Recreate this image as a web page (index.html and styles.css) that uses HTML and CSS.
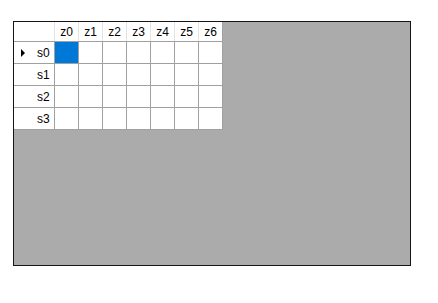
FILE: index.html
```html
<!DOCTYPE html>
<html lang="en">
<head>
  <meta charset="UTF-8">
  <title>Grid</title>
  <link rel="stylesheet" href="styles.css">
</head>
<body>
  <div class="painel">
    <div class="grade">
      <div class="cabecalho">
        <div class="canto"></div>
        <div class="col">z0</div>
        <div class="col">z1</div>
        <div class="col">z2</div>
        <div class="col">z3</div>
        <div class="col">z4</div>
        <div class="col">z5</div>
        <div class="col">z6</div>
      </div>
      <div class="linhas">
        <div class="lin atual"><span class="seta"></span><span class="rotulo">s0</span></div>
        <div class="cel sel"></div><div class="cel"></div><div class="cel"></div><div class="cel"></div><div class="cel"></div><div class="cel"></div><div class="cel"></div>
        <div class="lin"><span class="rotulo">s1</span></div>
        <div class="cel"></div><div class="cel"></div><div class="cel"></div><div class="cel"></div><div class="cel"></div><div class="cel"></div><div class="cel"></div>
        <div class="lin"><span class="rotulo">s2</span></div>
        <div class="cel"></div><div class="cel"></div><div class="cel"></div><div class="cel"></div><div class="cel"></div><div class="cel"></div><div class="cel"></div>
        <div class="lin"><span class="rotulo">s3</span></div>
        <div class="cel"></div><div class="cel"></div><div class="cel"></div><div class="cel"></div><div class="cel"></div><div class="cel"></div><div class="cel"></div>
      </div>
    </div>
  </div>
</body>
</html>
```
FILE: styles.css
```css
body {
  margin: 0;
  padding: 21px 0 0 13px;
  background: #fff;
  font-family: "Liberation Sans", Arial, sans-serif;
  font-size: 12px;
  color: #000;
}
.painel {
  width: 396px;
  height: 243px;
  border: 1px solid #141414;
  background: #ababab;
}
.grade {
  display: inline-block;
  vertical-align: top;
  background: #a0a0a0;
  padding: 0 1px 1px 0;
}
.cabecalho {
  display: grid;
  grid-template-columns: 40px repeat(7, 23px);
  grid-template-rows: 19px;
  gap: 1px;
  background: #e3e3e3;
  margin-bottom: 1px;
}
.canto, .col {
  background: #fff;
}
.col {
  display: flex;
  align-items: center;
  justify-content: center;
  padding-top: 1px;
}
.linhas {
  display: grid;
  grid-template-columns: 40px repeat(7, 23px);
  grid-auto-rows: 21px;
  gap: 1px;
}
.lin {
  background: #fff;
  display: flex;
  align-items: center;
  position: relative;
}
.rotulo {
  margin-left: 23px;
}
.seta {
  position: absolute;
  left: 7px;
  top: 7px;
  width: 0;
  height: 0;
  border-top: 4px solid transparent;
  border-bottom: 4px solid transparent;
  border-left: 4px solid #000;
}
.cel {
  background: #fff;
}
.cel.sel {
  background: #0078d7;
}
```
